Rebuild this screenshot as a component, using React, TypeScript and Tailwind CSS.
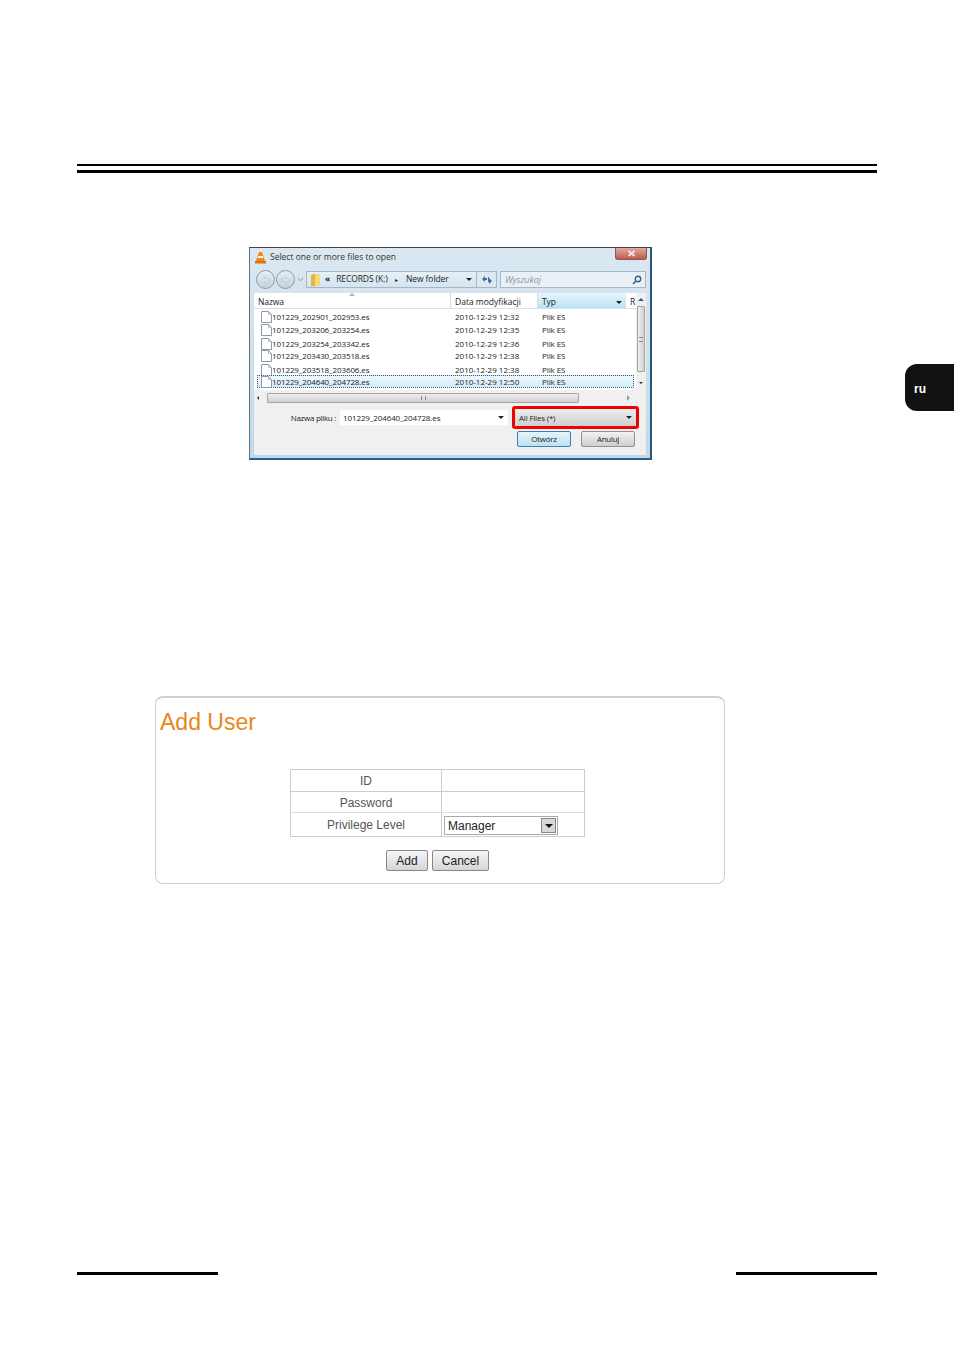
import React from "react";

const files = [
  { name: "101229_202901_202953.es", date: "2010-12-29 12:32", h: "h-[13px]" },
  { name: "101229_203206_203254.es", date: "2010-12-29 12:35", h: "h-[14px]" },
  { name: "101229_203254_203342.es", date: "2010-12-29 12:36", h: "h-[12px]" },
  { name: "101229_203430_203518.es", date: "2010-12-29 12:38", h: "h-[14px]" },
  { name: "101229_203518_203606.es", date: "2010-12-29 12:38", h: "h-[11px]" },
];

function FileIcon() {
  return (
    <svg width="11" height="12" viewBox="0 0 11 12" className="shrink-0">
      <path d="M0.5 0.5H7.5L10.5 3.5V11.5H0.5Z" fill="#fff" stroke="#8d99a6" />
      <path d="M7.5 0.5V3.5H10.5" fill="none" stroke="#b5bec7" />
    </svg>
  );
}

function Caret() {
  return <span className="h-0 w-0 border-x-[3px] border-t-[3px] border-x-transparent border-t-[#222]" />;
}

function FileRow({ name, date, h }: { name: string; date: string; h: string }) {
  return (
    <div className={h}>
      <div className="flex h-[12px] items-center">
        <div className="flex w-[201px] items-center pl-[7px]">
          <FileIcon />
          <span className="text-[#222]">{name}</span>
        </div>
        <span className="w-[87px] tracking-normal text-[#222]">{date}</span>
        <span className="text-[#222]">Plik ES</span>
      </div>
    </div>
  );
}

function NavCircle({ flip }: { flip?: boolean }) {
  return (
    <div className="flex h-[19px] w-[19px] items-center justify-center rounded-full border border-[#8c9aa6] bg-gradient-to-b from-[#e6edf3] to-[#c5d2dd]">
      <svg width="9" height="8" viewBox="0 0 9 8" className={flip ? "rotate-180" : ""}>
        <path d="M4 0.5L0.5 4L4 7.5V5.5H8.5V2.5H4Z" fill="#dbe4eb" stroke="#b6c3ce" strokeWidth="0.6" />
      </svg>
    </div>
  );
}

function Dialog() {
  return (
    <div className="ml-[249px] mt-[74px] flex h-[213px] w-[403px] flex-col border border-b-2 border-r-2 border-l-[#5d7284] border-t-[#444] border-r-[#2c556f] border-b-[#2f5f82] bg-gradient-to-b from-[#dbe8f2] to-[#bfd8ea] px-[4px] pb-[3px] font-['Open_Sans',sans-serif] text-[8px] leading-none tracking-[-0.1px] text-[#222]">
      <div className="flex h-[22px] shrink-0 items-start justify-between">
        <div className="flex items-center gap-[4px] pl-[1px] pt-[3px]">
          <svg width="11" height="13" viewBox="0 0 11 13">
            <path d="M4 1H7L10 10H1Z" fill="#f08a12" />
            <path d="M3 5H8L8.5 7H2.5Z" fill="#f7f3ea" />
            <rect x="0" y="10" width="11" height="2.5" fill="#d9760a" />
          </svg>
          <span className="text-[8.5px] tracking-normal text-[#333]">Select one or more files to open</span>
        </div>
        <div className="mr-[-1px] flex h-[12px] w-[32px] items-center justify-center rounded-b-[3px] border border-t-0 border-[#8c5a55] bg-gradient-to-b from-[#e0aaa0] to-[#c0584e]">
          <svg width="9" height="7" viewBox="0 0 9 7">
            <path d="M1.5 1L7.5 6M7.5 1L1.5 6" stroke="#eee" strokeWidth="1.8" />
          </svg>
        </div>
      </div>

      <div className="flex h-[19px] shrink-0 items-center">
        <div className="ml-[2px] flex">
          <NavCircle />
          <div className="ml-px"><NavCircle flip /></div>
        </div>
        <svg width="7" height="5" viewBox="0 0 7 5" className="ml-[2px]">
          <path d="M1 1L3.5 4L6 1" fill="none" stroke="#8ba0b3" />
        </svg>
        <div className="ml-[2px] flex h-[17px] w-[171px] items-center border border-[#a5b7c6] bg-gradient-to-b from-[#e6f0f7] to-[#d5e4ef] pl-[3px] text-[8.5px]">
          <svg width="11" height="14" viewBox="0 0 11 14">
            <path d="M1 2L5 0.5V13L1 13.5Z" fill="#e0b93a" />
            <path d="M5 1H10V12.5H5Z" fill="#f5d97a" />
          </svg>
          <span className="ml-[4px] font-bold">«</span>
          <span className="ml-[6px] w-[56px]">RECORDS (K:)</span>
          <span className="ml-[3px] text-[6px]">▸</span>
          <span className="ml-[8px] w-[60px]">New folder</span>
          <Caret />
        </div>
        <div className="flex h-[17px] w-[20px] items-center justify-center border border-l-0 border-[#a5b7c6] bg-[#dde9f2]">
          <svg width="12" height="10" viewBox="0 0 12 10">
            <path d="M1 4L4 1V3H6V5H4V7Z" fill="#3f6f99" />
            <path d="M11 6L8 9V7H7V2H8V3Z" fill="#3f6f99" />
          </svg>
        </div>
        <div className="ml-[3px] flex h-[17px] w-[146px] items-center justify-between border border-[#a5b7c6] bg-[#e9f1f7] pl-[4px] pr-[3px]">
          <span className="text-[9px] italic text-[#8a97a3]">Wyszukaj</span>
          <svg width="10" height="10" viewBox="0 0 10 10">
            <circle cx="6" cy="4" r="2.7" fill="none" stroke="#33618c" strokeWidth="1.4" />
            <path d="M4 6L1 9" stroke="#33618c" strokeWidth="1.6" />
          </svg>
        </div>
      </div>

      <div className="mt-[4px] flex flex-1 flex-col bg-[#f0f0f0]">
        <div className="flex h-[97px] shrink-0 bg-white">
          <div className="flex flex-1 flex-col">
            <div className="flex h-[16px] items-center border-b border-[#d5e1ea] text-[8.5px]">
              <div className="relative flex h-full w-[197px] items-center border-r border-[#d5dde4] pl-[4px] pt-[3px]">
                Nazwa
                <svg width="6" height="3" viewBox="0 0 6 3" className="absolute left-[95px] top-0">
                  <path d="M0 3L3 0L6 3Z" fill="#a9b4bd" />
                </svg>
              </div>
              <div className="flex h-full w-[87px] items-center border-r border-[#d5dde4] pl-[4px] pt-[3px] tracking-normal">Data modyfikacji</div>
              <div className="flex h-full w-[88px] items-center justify-between bg-gradient-to-b from-[#e8f5fc] to-[#b9e3f6] px-[4px] pt-[3px]">
                Typ
                <Caret />
              </div>
              <span className="pl-[4px] pt-[3px]">R</span>
            </div>
            <div className="flex flex-col pt-[2px] text-[8px]">
              {files.map((f) => (
                <FileRow key={f.name} {...f} />
              ))}
              <div className="ml-[3px] mr-[2px] flex h-[13px] items-center border border-dotted border-[#3a5a78] bg-gradient-to-b from-[#eef8fd] to-[#d3ecf9]">
                <div className="flex w-[197px] items-center pl-[3px]">
                  <FileIcon />
                  <span>101229_204640_204728.es</span>
                </div>
                <span className="w-[87px] tracking-normal">2010-12-29 12:50</span>
                <span>Plik ES</span>
              </div>
            </div>
          </div>
          <div className="flex w-[10px] flex-col items-center bg-[#f0f0f0] text-[#555]">
            <span className="mt-[5px] h-0 w-0 border-x-[3px] border-b-[3px] border-x-transparent border-b-[#555]" />
            <div className="mt-[5px] flex h-[66px] w-[8px] items-center justify-center rounded-[1px] border border-[#a3a3a3] bg-gradient-to-r from-[#f0f0f0] to-[#cfcfcf]">
              <span className="h-[5px] w-[4px] border-y border-[#888]" />
            </div>
            <span className="mt-[10px] h-0 w-0 border-x-[2px] border-t-[2px] border-x-transparent border-t-[#333]" />
          </div>
        </div>

        <div className="mt-[2px] flex h-[12px] shrink-0 items-center pl-[3px] pr-[16px]">
          <span className="h-0 w-0 border-y-[2px] border-r-[2px] border-y-transparent border-r-[#333]" />
          <div className="ml-[8px] flex h-[10px] w-[312px] items-center justify-center rounded-[1px] border border-[#a3a3a3] bg-gradient-to-b from-[#efefef] to-[#cfcfcf]">
            <span className="h-[4px] w-[5px] border-x border-[#888]" />
          </div>
          <span className="ml-auto h-0 w-0 border-y-[3px] border-l-[3px] border-y-transparent border-l-[#999]" />
        </div>

        <div className="mt-[2px] flex h-[23px] shrink-0 items-center">
          <span className="w-[82px] text-right text-[8px] tracking-[-0.3px]">Nazwa pliku :</span>
          <div className="ml-[4px] flex h-[15px] w-[168px] items-center justify-between bg-white pl-[3px] pr-[4px]">
            <span>101229_204640_204728.es</span>
            <Caret />
          </div>
          <div className="ml-[4px] flex h-[23px] w-[127px] items-center rounded-[3px] border-[3px] border-[#f00000] bg-gradient-to-b from-[#eeeeee] to-[#cfcfcf] px-[4px]">
            <span className="flex-1 tracking-[-0.2px]">All Files (*)</span>
            <Caret />
          </div>
        </div>

        <div className="mt-[2px] flex items-start pl-[263px]">
          <div className="flex h-[16px] w-[54px] items-center justify-center rounded-[2px] border border-[#3c7fb1] bg-gradient-to-b from-[#e5f4fb] to-[#bfe0f0] tracking-[-0.3px]">Otwórz</div>
          <div className="ml-[10px] flex h-[16px] w-[54px] items-center justify-center rounded-[2px] border border-[#8e8f8f] bg-gradient-to-b from-[#f2f2f2] to-[#cfcfcf] tracking-[-0.3px]">Anuluj</div>
        </div>
      </div>
    </div>
  );
}

function AddUser() {
  const labelCell = "flex items-center justify-center border-r border-[#ccc]";
  return (
    <div className="ml-[155px] mt-[236px] flex h-[188px] w-[570px] flex-col rounded-[8px] border border-t-2 border-[#cfcfcf] font-['Liberation_Sans',sans-serif] text-[#555]">
      <h1 className="pl-[4px] pt-[11px] text-[23px] leading-[26px] text-[#e8861e]">Add User</h1>
      <div className="ml-[134px] mt-[34px] flex h-[68px] w-[295px] flex-col border border-[#ccc] text-[12px]">
        <div className="flex h-[22px] border-b border-[#ccc]">
          <div className={`${labelCell} w-[151px]`}>ID</div>
        </div>
        <div className="flex h-[21px] border-b border-[#ddd]">
          <div className={`${labelCell} w-[151px] pt-px`}>Password</div>
        </div>
        <div className="flex flex-1">
          <div className={`${labelCell} w-[151px]`}>Privilege Level</div>
          <div className="ml-[2px] mt-[3px] flex h-[19px] w-[114px] items-center justify-between border border-[#aaa] pl-[3px] pr-px text-[#222]">
            Manager
            <span className="flex h-[15px] w-[15px] items-center justify-center border border-[#888] bg-[#d8d8d8]">
              <span className="h-0 w-0 border-x-[4px] border-t-[4px] border-x-transparent border-t-[#111]" />
            </span>
          </div>
        </div>
      </div>
      <div className="ml-[230px] mt-[13px] flex gap-[4px] text-[12px] text-[#222]">
        <button className="h-[21px] w-[42px] rounded-[2px] border border-[#888] bg-gradient-to-b from-[#f7f7f7] to-[#d5d5d5]">Add</button>
        <button className="h-[21px] w-[57px] rounded-[2px] border border-[#888] bg-gradient-to-b from-[#f7f7f7] to-[#d5d5d5]">Cancel</button>
      </div>
    </div>
  );
}

export default function App() {
  return (
    <div className="relative h-[1350px] w-[954px] bg-white">
      <div className="pt-[164px]">
        <div className="mx-[77px] h-[2px] bg-black" />
        <div className="mx-[77px] mt-[4px] h-[3px] bg-black" />
        <Dialog />
        <AddUser />
        <div className="mx-[77px] mt-[388px] flex justify-between">
          <div className="h-[3px] w-[141px] bg-black" />
          <div className="h-[3px] w-[141px] bg-black" />
        </div>
      </div>
      <div className="absolute left-[905px] top-[364px] flex h-[47px] w-[49px] items-center rounded-l-[12px] bg-[#111] pl-[9px] pt-[2px] font-['Liberation_Sans',sans-serif] text-[12px] font-bold text-white">
        ru
      </div>
    </div>
  );
}
